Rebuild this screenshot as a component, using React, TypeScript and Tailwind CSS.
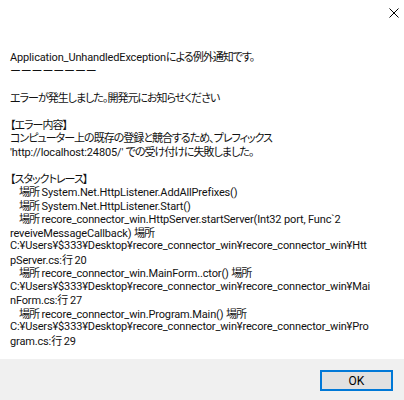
type Line = { text: string; indent?: boolean; wide?: boolean }

const lines: Line[] = [
  { text: 'Application_UnhandledExceptionによる例外通知です。' },
  { text: 'ーーーーーーーー', wide: true },
  { text: '' },
  { text: 'エラーが発生しました。開発元にお知らせください' },
  { text: '' },
  { text: '【エラー内容】' },
  { text: 'コンピューター上の既存の登録と競合するため、プレフィックス' },
  { text: "'http://localhost:24805/' での受け付けに失敗しました。" },
  { text: '' },
  { text: '【スタックトレース】' },
  { text: '場所 System.Net.HttpListener.AddAllPrefixes()', indent: true },
  { text: '場所 System.Net.HttpListener.Start()', indent: true },
  { text: '場所 recore_connector_win.HttpServer.startServer(Int32 port, Func`2', indent: true },
  { text: 'reveiveMessageCallback) 場所' },
  { text: 'C:¥Users¥$333¥Desktop¥recore_connector_win¥recore_connector_win¥Htt' },
  { text: 'pServer.cs:行 20' },
  { text: '場所 recore_connector_win.MainForm..ctor() 場所', indent: true },
  { text: 'C:¥Users¥$333¥Desktop¥recore_connector_win¥recore_connector_win¥Mai' },
  { text: 'nForm.cs:行 27' },
  { text: '場所 recore_connector_win.Program.Main() 場所', indent: true },
  { text: 'C:¥Users¥$333¥Desktop¥recore_connector_win¥recore_connector_win¥Pro' },
  { text: 'gram.cs:行 29' },
]

// split into japanese / latin runs so kana can be squeezed like Yu Gothic UI
function Runs({ text, wide }: { text: string; wide?: boolean }) {
  const parts = text.split(/([\u3000-\u30ff\u4e00-\u9fff\uff00-\uffef]+)/)
  return (
    <>
      {parts.map((p, i) =>
        i % 2 === 1 ? (
          <span
            key={i}
            className={`font-['Noto_Sans_CJK_JP',sans-serif] [font-feature-settings:'palt'] ${wide ? 'tracking-normal' : 'tracking-[-1px]'}`}
          >
            {p}
          </span>
        ) : (
          <span key={i}>{p}</span>
        )
      )}
    </>
  )
}

export default function App() {
  return (
    <div className="w-[404px] h-[400px] flex flex-col bg-white text-[#111] font-['Roboto','Noto_Sans_CJK_JP',sans-serif]">
      <div className="flex justify-end h-[25px] pr-[5px] pt-[8px]">
        <svg width="10" height="10" viewBox="0 0 10 10">
          <path d="M0.5 0.5 L9.5 9.5 M9.5 0.5 L0.5 9.5" stroke="#000" strokeWidth="1" />
        </svg>
      </div>
      <div className="flex-1 pl-[10px] pt-[25px] text-[11px] tracking-[-0.15px]">
        {lines.map((line, i) => (
          <div key={i} className={`whitespace-pre h-[13.5px] leading-[13.5px] ${line.indent ? 'pl-[9px]' : ''}`}>
            <Runs text={line.text} wide={line.wide} />
          </div>
        ))}
      </div>
      <div className="h-[41px] bg-[#f0f0f0] flex items-start justify-end pt-[11px] pr-[11px]">
        <button className="w-[73px] h-[21px] border-2 border-[#0078d7] bg-[#e1e1e1] text-[12px] leading-none text-black font-['Roboto',sans-serif] flex items-center justify-center">
          OK
        </button>
      </div>
    </div>
  )
}
